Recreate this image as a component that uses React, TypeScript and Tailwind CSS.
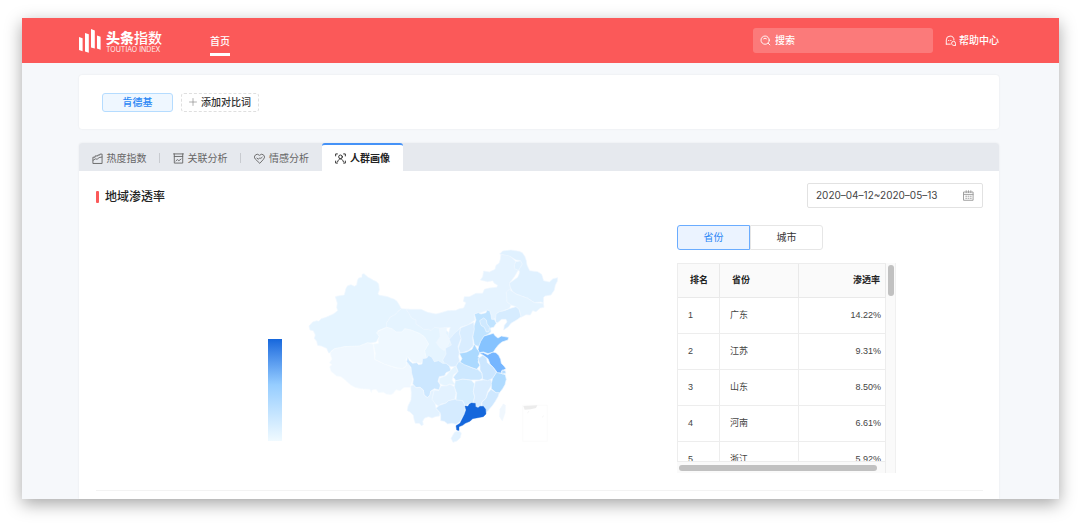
import React, { useState } from 'react';
import clsx from 'clsx';

const regions = [
  { name: '广东', rate: '14.22%' },
  { name: '江苏', rate: '9.31%' },
  { name: '山东', rate: '8.50%' },
  { name: '河南', rate: '6.61%' },
  { name: '浙江', rate: '5.92%' },
];

// Icons share a 12x12 grid
const Icon: React.FC<{ children: React.ReactNode; className?: string }> = ({
  children,
  className = 'h-[11px] w-[11px]',
}) => (
  <svg
    viewBox="0 0 12 12"
    fill="none"
    stroke="currentColor"
    strokeLinecap="round"
    strokeLinejoin="round"
    aria-hidden="true"
    className={clsx('shrink-0', className)}
  >
    {children}
  </svg>
);

const HeatIcon = () => (
  <Icon>
    <path d="M1 11V4.6h2.4V3.2h3V2.2h2.2V1.2H11V11zM1.2 8l2.4-1.6 2 .4L7.8 5l3-.6" />
  </Icon>
);

const RelationIcon = () => (
  <Icon>
    <path d="M.6 1h10.8M1.4 1v10h9.2V1M1.4 3.8h9.2M3.2 8.6l1.6-1.4 1.6 1.2 2.4-1.8" />
  </Icon>
);

const HeartIcon = () => (
  <Icon>
    <path d="M6 11 1.4 6.6a3 3 0 0 1 0-4.3 3 3 0 0 1 4.2 0l.4.3.4-.3a3 3 0 0 1 4.2 0 3 3 0 0 1 0 4.3zM3.2 5.6l1.7 1.2 1.4-1.6 1 .8 1.6-1.4" />
  </Icon>
);

const CrowdIcon = () => (
  <Icon>
    <path d="M.7 3.2V1h1.9M9.4 1h1.9v2.2M.7 8.8V11h1.9M9.4 11h1.9V8.8" />
    <circle cx="6" cy="4.2" r="2" />
    <path d="M2.8 9.6C3.4 7.6 4.6 6.4 6 6.4s2.6 1.2 3.2 3.2" />
  </Icon>
);

const SearchIcon = () => (
  <Icon className="h-[11px] w-[11px]">
    <circle cx="5.6" cy="5.6" r="4.5" />
    <path d="m9 9 1.8 1.8M4 4a2.4 2.4 0 0 1 3 0" />
  </Icon>
);

const HelpIcon = () => (
  <Icon>
    <path d="M1.4 10V5.4a4.2 4.2 0 0 1 8.4 0M1.4 10h4.4M3.8 6h.4M6.2 6h.4" />
    <path d="M11.4 11.4V9a2.1 2.1 0 0 0-4.2 0c0 1.3.9 2.4 2.1 2.4z" />
  </Icon>
);

const CalendarIcon = () => (
  <Icon>
    <path d="M1 2.2h10v9H1zM1 4.8h10M3.5.8v2M6 .8v2M8.5.8v2" />
    <path d="M3 6.8h1M5.5 6.8h1M8 6.8h1M3 9h1M5.5 9h1M8 9h1" />
  </Icon>
);

const tabs = [
  { name: '热度指数', icon: HeatIcon },
  { name: '关联分析', icon: RelationIcon },
  { name: '情感分析', icon: HeartIcon },
  { name: '人群画像', icon: CrowdIcon },
];

const Logo = () => (
  <a href="#" className="flex items-center gap-[5px]" aria-label="头条指数">
    <svg viewBox="0 0 22 24" fill="#fff" className="h-6 w-[22px]" aria-hidden="true">
      <path d="m0 8 3.6 1.2v13L0 21zM6 4l3.8 1.2v18.6L6 22.6zM12 0l3.8 1.4v18.2L12 18.4zM18 6.6l3.6 1.2v13L18 19.6z" />
    </svg>
    <span className="flex flex-col pt-0.5">
      <span className="text-[14px] leading-4">
        <b className="font-black">头条</b>
        <span className="font-medium">指数</span>
      </span>
      <span className="text-[7px] leading-[7px] opacity-90">TOUTIAO INDEX</span>
    </span>
  </a>
);

const Header = () => (
  <header className="flex h-[45px] items-center bg-[#fb5959] pr-[60px] pl-[57px] text-white">
    <Logo />
    <nav className="ml-12 flex h-full items-center">
      <a href="#" className="mt-2 border-b-[3px] border-white pb-1 text-[10px] leading-4 font-medium">
        首页
      </a>
    </nav>
    <label className="ml-auto flex h-[25px] w-[180px] items-center gap-1 rounded-[3px] bg-white/20 px-[7px]">
      <SearchIcon />
      <input
        type="text"
        aria-label="搜索"
        placeholder="搜索"
        className="min-w-0 flex-1 bg-transparent text-[10px] font-medium outline-none placeholder:text-white"
      />
    </label>
    <a href="#" className="ml-3 flex items-center gap-[3px] text-[10px] font-medium">
      <HelpIcon />
      帮助中心
    </a>
  </header>
);

const ChinaMap = () => (
  <svg
    viewBox="0 0 810 621"
    className="h-[207px] w-[270px] shrink-0"
    stroke="#f0f8ff"
    strokeWidth="2"
    strokeLinejoin="round"
    role="img"
    aria-label="地域渗透率地图"
  >
    {/* west */}
    <path fill="#e5f4ff" d="M316 206 340 208 375 240 430 250 470 290 480 380 440 375 415 365 395 350 380 360 350 365 300 300 268 262 272 248 282 232Z" />
    <path fill="#e5f4ff" d="M204 101 216 112 225 116 232 121 240 124 248 132 250 150 246 160 248 165 275 170 284 174 295 178 303 184 308 192 316 206 306 214 300 222 282 232 276 242 272 248 272 262 245 272 250 290 240 306 215 310 190 320 160 321 145 320 130 326 116 326 106 332 103 338 98 339 92 325 76 318 65 316 62 304 55 295 58 285 52 272 42 270 39 258 50 246 62 242 68 244 76 236 90 232 112 222 125 212 122 202 124 190 118 170 126 168 145 165 150 145 155 137 165 134 175 139 182 135 184 122 188 114 198 112 198 103Z" />
    <path fill="#f0f8ff" stroke="#f8fcff" d="M103 338 116 326 145 320 190 318 215 308 232 312 234 330 236 358 265 372 300 384 325 384 335 365 345 385 350 420 342 442 325 442 312 452 300 449 292 460 285 464 272 463 262 457 248 458 240 448 228 450 226 458 222 448 195 446 180 443 165 436 150 422 135 410 122 408 105 394 101 380 108 374 100 368 108 358 104 346Z" />
    <path fill="#eff8ff" stroke="#f8fcff" d="M272 262 288 266 300 276 318 276 326 266 345 270 370 280 385 290 398 312 386 332 390 352 375 370 350 366 335 350 330 358 332 376 320 386 300 383 265 372 236 358 238 340 232 312 248 310 246 300 250 290 242 278 250 272Z" />

    {/* north and north-east */}
    <g transform="translate(315 0)">
      <path fill="#e5f3ff" d="M15 208 60 208 80 217 105 222 120 218 140 212 165 211 175 206 188 204 195 188 187 184 190 170 205 170 225 160 245 160 250 148 265 144 287 142 290 136 280 130 275 122 260 125 238 120 245 110 248 93 265 96 282 88 285 76 294 70 298 58 300 42 325 45 345 65 340 80 352 90 340 110 325 130 330 150 320 160 318 185 330 195 325 205 305 213 290 218 285 235 270 240 270 225 262 210 240 218 220 222 222 240 200 255 178 262 160 290 150 300 140 290 148 262 120 265 100 262 90 272 82 268 68 268 58 260 45 252 45 240 32 235 25 222Z" />
      <path fill="#edf7ff" d="M115 266 138 262 134 280 148 300 140 318 130 332 118 324 106 308 118 290Z" />
      <path fill="#e0f1ff" d="M296 42 305 33 330 30 355 34 364 38 372 50 376 62 378 75 386 92 410 95 422 103 428 122 445 126 456 116 470 113 469 124 463 135 460 150 450 165 432 168 428 172 427 190 420 186 400 188 380 175 355 166 345 162 335 155 328 142 325 130 350 112 355 100 355 92 340 86 340 74 345 65 358 62 345 60 325 48Z" />
      <path fill="none" d="M345 65 358 62 364 72 352 92" />
      <path fill="#e4f3ff" d="M316 156 325 148 335 155 345 162 380 175 400 188 427 190 429 202 418 204 405 215 395 212 388 225 375 224 360 232 355 210 345 200 330 195 318 185Z" />
      <path fill="#d6ecff" d="M285 222 295 215 310 212 325 206 345 200 354 208 360 230 350 238 330 250 322 260 308 270 310 256 318 246 315 238 302 238 290 248 283 246Z" />
      <path fill="#c0e3ff" d="M220 222 232 218 240 222 255 218 258 210 266 212 270 225 272 238 280 238 286 250 278 262 268 264 270 275 260 284 250 288 245 300 235 320 220 315 215 290 218 260 225 240Z" />
      <path fill="#cfe9ff" d="M236 242 248 234 256 240 258 252 266 262 264 275 256 276 250 262 240 256Z" />
      <path fill="#d9edff" d="M178 264 200 255 218 247 220 268 215 290 217 318 202 332 178 340 172 325 180 300 175 280Z" />
    </g>

    {/* centre, east and south */}
    <g transform="translate(300 270)">
      <path fill="#daedff" d="M193-5 175 10 160 28 166 45 148 55 150 72 140 90 145 100 165 110 180 110 192 98 188 80 190 68 186 50 195 25 190 10Z" />
      <path fill="#cce7ff" d="M35 80 40 92 50 100 62 98 68 104 78 102 80 86 92 84 98 76 108 82 115 95 128 92 140 100 150 100 160 108 165 122 150 128 146 137 130 140 126 154 133 165 130 180 115 176 104 184 102 196 94 203 84 195 82 180 72 172 60 173 50 162 52 148 47 130 45 112 32 95Z" />
      <path fill="#e3f2ff" d="M44 168 52 165 60 173 72 172 82 180 84 195 94 203 102 196 104 184 115 180 110 200 118 222 120 235 132 248 130 258 118 260 108 264 98 260 86 264 80 274 82 284 76 287 70 280 58 280 54 268 52 256 42 246 34 242 36 228 45 210 46 190Z" />
      <path fill="#e5f4ff" d="M165 120 178 108 186 124 172 135 168 150 178 165 160 162 150 168 140 165 130 160 130 145 150 137Z" />
      <path fill="#e3f2ff" d="M115 180 128 182 135 168 150 168 162 163 175 170 180 190 176 208 158 212 150 220 135 222 128 228 118 222 108 208Z" />
      <path fill="#d5ebff" d="M120 235 130 226 150 219 158 212 176 208 195 206 207 222 207 248 192 275 180 283 168 280 155 282 145 274 134 272 134 255 132 248Z" />
      <path fill="#d5edff" d="M178 152 200 147 225 150 236 162 232 185 236 200 232 220 222 219 208 228 200 212 180 210 182 190 175 170Z" />
      <path fill="#daedff" d="M236 162 238 154 260 150 283 147 288 160 284 170 275 185 270 205 258 215 256 228 240 232 238 220 232 218 236 200 232 185Z" />
      <path fill="#cfe8ff" d="M285 178 300 188 311 186 306 200 298 214 290 226 278 240 270 248 266 234 258 228 258 216 270 205 276 188Z" />
      <path fill="#cde8ff" d="M180 108 188 95 200 98 225 112 245 118 258 130 260 145 250 150 225 150 200 147 180 152 172 142 186 124Z" />
      <path fill="#abd9ff" d="M190 70 212 66 228 58 235 42 245 60 254 66 246 80 252 84 246 96 252 106 242 118 225 112 205 104 192 96 198 86Z" />
      <path fill="#cbe6ff" d="M246 86 260 76 272 84 274 98 292 112 302 128 290 145 275 152 260 148 258 130 252 120 252 106Z" />
      <path fill="#b0dbff" d="M302 126 316 130 328 134 331 148 327 164 320 176 311 188 300 188 286 176 286 160 290 145Z" />
      <path fill="#76b6ff" d="M250 70 262 68 275 74 290 66 300 68 308 76 314 88 316 100 324 108 330 116 316 124 318 129 304 128 292 112 282 102 276 86 262 76Z" />
      <path fill="#b7ddff" d="m318 120 10 2 2 8-12 2z" />
      <path fill="#86c3ff" d="M248 50 254 34 264 18 278 14 292 10 298 18 306 24 316 18 338 22 336 30 318 36 308 44 300 54 292 66 276 71 262 66 250 68 246 58Z" />
      <path fill="#1567dc" stroke="#1567dc" strokeWidth="1" d="M220 222 226 219 238 220 239 230 246 233 252 229 262 229 269 238 270 252 262 260 246 263 230 266 222 274 208 280 200 286 189 290 189 302 182 300 180 287 192 280 198 268 206 252 210 240 207 228 216 229Z" />
      <path fill="#e2f2ff" d="m176 306 14-3 6 6-3 14-10 10-12 4-6-12z" />
      <path fill="#f0f7fd" d="m322 222 6 4-1 22-8 24-8-12 1-22z" />
      <path fill="none" stroke="#f9f9f9" d="M380 226h74v108h-74z" />
      <path fill="#ececec" stroke="none" d="m382 228 42-2-4 8-16 4-18 1zM400 243l-6 8 2-6zM443 256l-3 8v-6z" />
    </g>
  </svg>
);

const RateTable = () => (
  <div className="grid w-[219px] grid-cols-[209px_10px] grid-rows-[198px_12px] font-['Liberation_Sans','Noto_Sans_CJK_SC',sans-serif] text-[9px] text-[#444]">
    <div className="overflow-hidden border-t border-l border-[#ededed]">
      <table className="w-full table-fixed border-separate border-spacing-0">
        <thead className="bg-[#fafafa] text-[#222]">
          <tr className="h-[34px]">
            <th className="w-[42px] border-r border-b border-[#e9e9e9] pl-3 text-left font-bold">排名</th>
            <th className="w-[79px] border-r border-b border-[#e9e9e9] pl-3 text-left font-bold">省份</th>
            <th className="border-r border-b border-[#e9e9e9] pr-[5px] text-right font-bold">渗透率</th>
          </tr>
        </thead>
        <tbody>
          {regions.map((region, index) => (
            <tr key={region.name} className="h-9">
              <td className="border-r border-b border-[#ededed] pl-[10px]">{index + 1}</td>
              <td className="border-r border-b border-[#ededed] pl-[10px]">{region.name}</td>
              <td className="border-r border-b border-[#ededed] pr-1 text-right">{region.rate}</td>
            </tr>
          ))}
        </tbody>
      </table>
    </div>
    <div className="row-span-2 border-r border-[#f0f0f0] bg-[#fafafa] px-0.5 pt-0.5">
      <div className="h-[31px] w-1.5 rounded-full bg-[#c1c1c1]" />
    </div>
    <div className="border-t border-r border-[#ededed] bg-[#fafafa] px-0.5 pt-[3px]">
      <div className="h-1.5 w-[198px] rounded-full bg-[#c1c1c1]" />
    </div>
  </div>
);

export default function App() {
  const [activeTab, setActiveTab] = useState('人群画像');
  const [scope, setScope] = useState('省份');

  return (
    <div className="bg-white pt-[18px] pr-[21px] pb-[25px] pl-[22px] font-['Inter','Noto_Sans_CJK_SC',sans-serif]">
      <div className="bg-[#f6f8fb] shadow-[0_5px_16px_rgba(0,0,0,0.35)]">
        <Header />

        <main className="pt-3 pr-[60px] pl-[57px]">
          <section className="flex h-[54px] items-center gap-2 rounded-[3px] bg-white px-[23px] shadow-[0_0_2px_rgba(0,0,0,0.08)]">
            <button className="h-[19px] w-[71px] rounded-[3px] border border-[#b5dcff] bg-[#eff7ff] text-[10px] leading-4 font-medium text-[#2b87f5]">
              肯德基
            </button>
            <button className="flex h-[19px] w-[78px] items-center justify-center gap-1 rounded-[3px] border border-dashed border-[#dfdfdf] text-[10px] font-medium text-[#333]">
              <Icon className="h-2 w-2 text-[#888]">
                <path d="M6 .8v10.4M.8 6h10.4" />
              </Icon>
              添加对比词
            </button>
          </section>

          <section className="mt-3.5 rounded-t-[3px] bg-white shadow-[0_0_2px_rgba(0,0,0,0.08)]">
            <div role="tablist" className="flex h-7 rounded-t-[3px] bg-[#e6e9ee]">
              {tabs.map((tab, index) => (
                <button
                  key={tab.name}
                  role="tab"
                  aria-selected={activeTab === tab.name}
                  onClick={() => setActiveTab(tab.name)}
                  className={clsx(
                    'flex w-[81px] items-center border-t-2 text-[10px]',
                    activeTab === tab.name
                      ? 'rounded-t-[3px] border-[#4592f7] bg-white font-bold text-[#222]'
                      : 'border-transparent text-[#666]'
                  )}
                >
                  <span className="flex flex-1 items-center justify-center gap-1">
                    <tab.icon />
                    {tab.name}
                  </span>
                  {index < 2 && <span className="h-2.5 w-px bg-[#c8cbd0]" />}
                </button>
              ))}
            </div>

            <div className="pt-3 pr-4 pb-2 pl-[17px]">
              <div className="flex items-center justify-between">
                <h2 className="flex items-center gap-1.5 pt-[3px] text-[12px] font-medium text-[#222]">
                  <span className="h-3 w-[3px] rounded-[1px] bg-[#fb5959]" />
                  地域渗透率
                </h2>
                <button className="flex h-[25px] w-44 items-center justify-between rounded-[2px] border border-[#e2e2e2] px-2 text-[10px] text-[#444]">
                  2020–04–12~2020–05–13
                  <span className="text-[#999]">
                    <CalendarIcon />
                  </span>
                </button>
              </div>

              <div className="mt-[17px] flex border-b border-[#f3f3f3] pb-[17px]">
                <div className="flex flex-1 items-start justify-center gap-3.5 pl-[60px]">
                  <div className="mt-[114px] h-[102px] w-3.5 bg-linear-to-b from-[#1567dc] via-[#96cdff] via-45% to-[#f0faff]" />
                  <div className="pt-[15px]">
                    <ChinaMap />
                  </div>
                </div>
                <div className="w-[306px]">
                  <div className="mb-[13px] flex w-[146px] text-[10px]">
                    {['省份', '城市'].map((name) => (
                      <button
                        key={name}
                        aria-pressed={scope === name}
                        onClick={() => setScope(name)}
                        className={clsx(
                          'h-[25px] w-[73px] border first:rounded-l-[3px] last:rounded-r-[3px]',
                          scope === name
                            ? 'border-[#6aacff] bg-[#ebf3ff] text-[#2b87f5]'
                            : 'border-[#e6e6e6] text-[#333]'
                        )}
                      >
                        {name}
                      </button>
                    ))}
                  </div>
                  <RateTable />
                </div>
              </div>
            </div>
          </section>
        </main>
      </div>
    </div>
  );
}
